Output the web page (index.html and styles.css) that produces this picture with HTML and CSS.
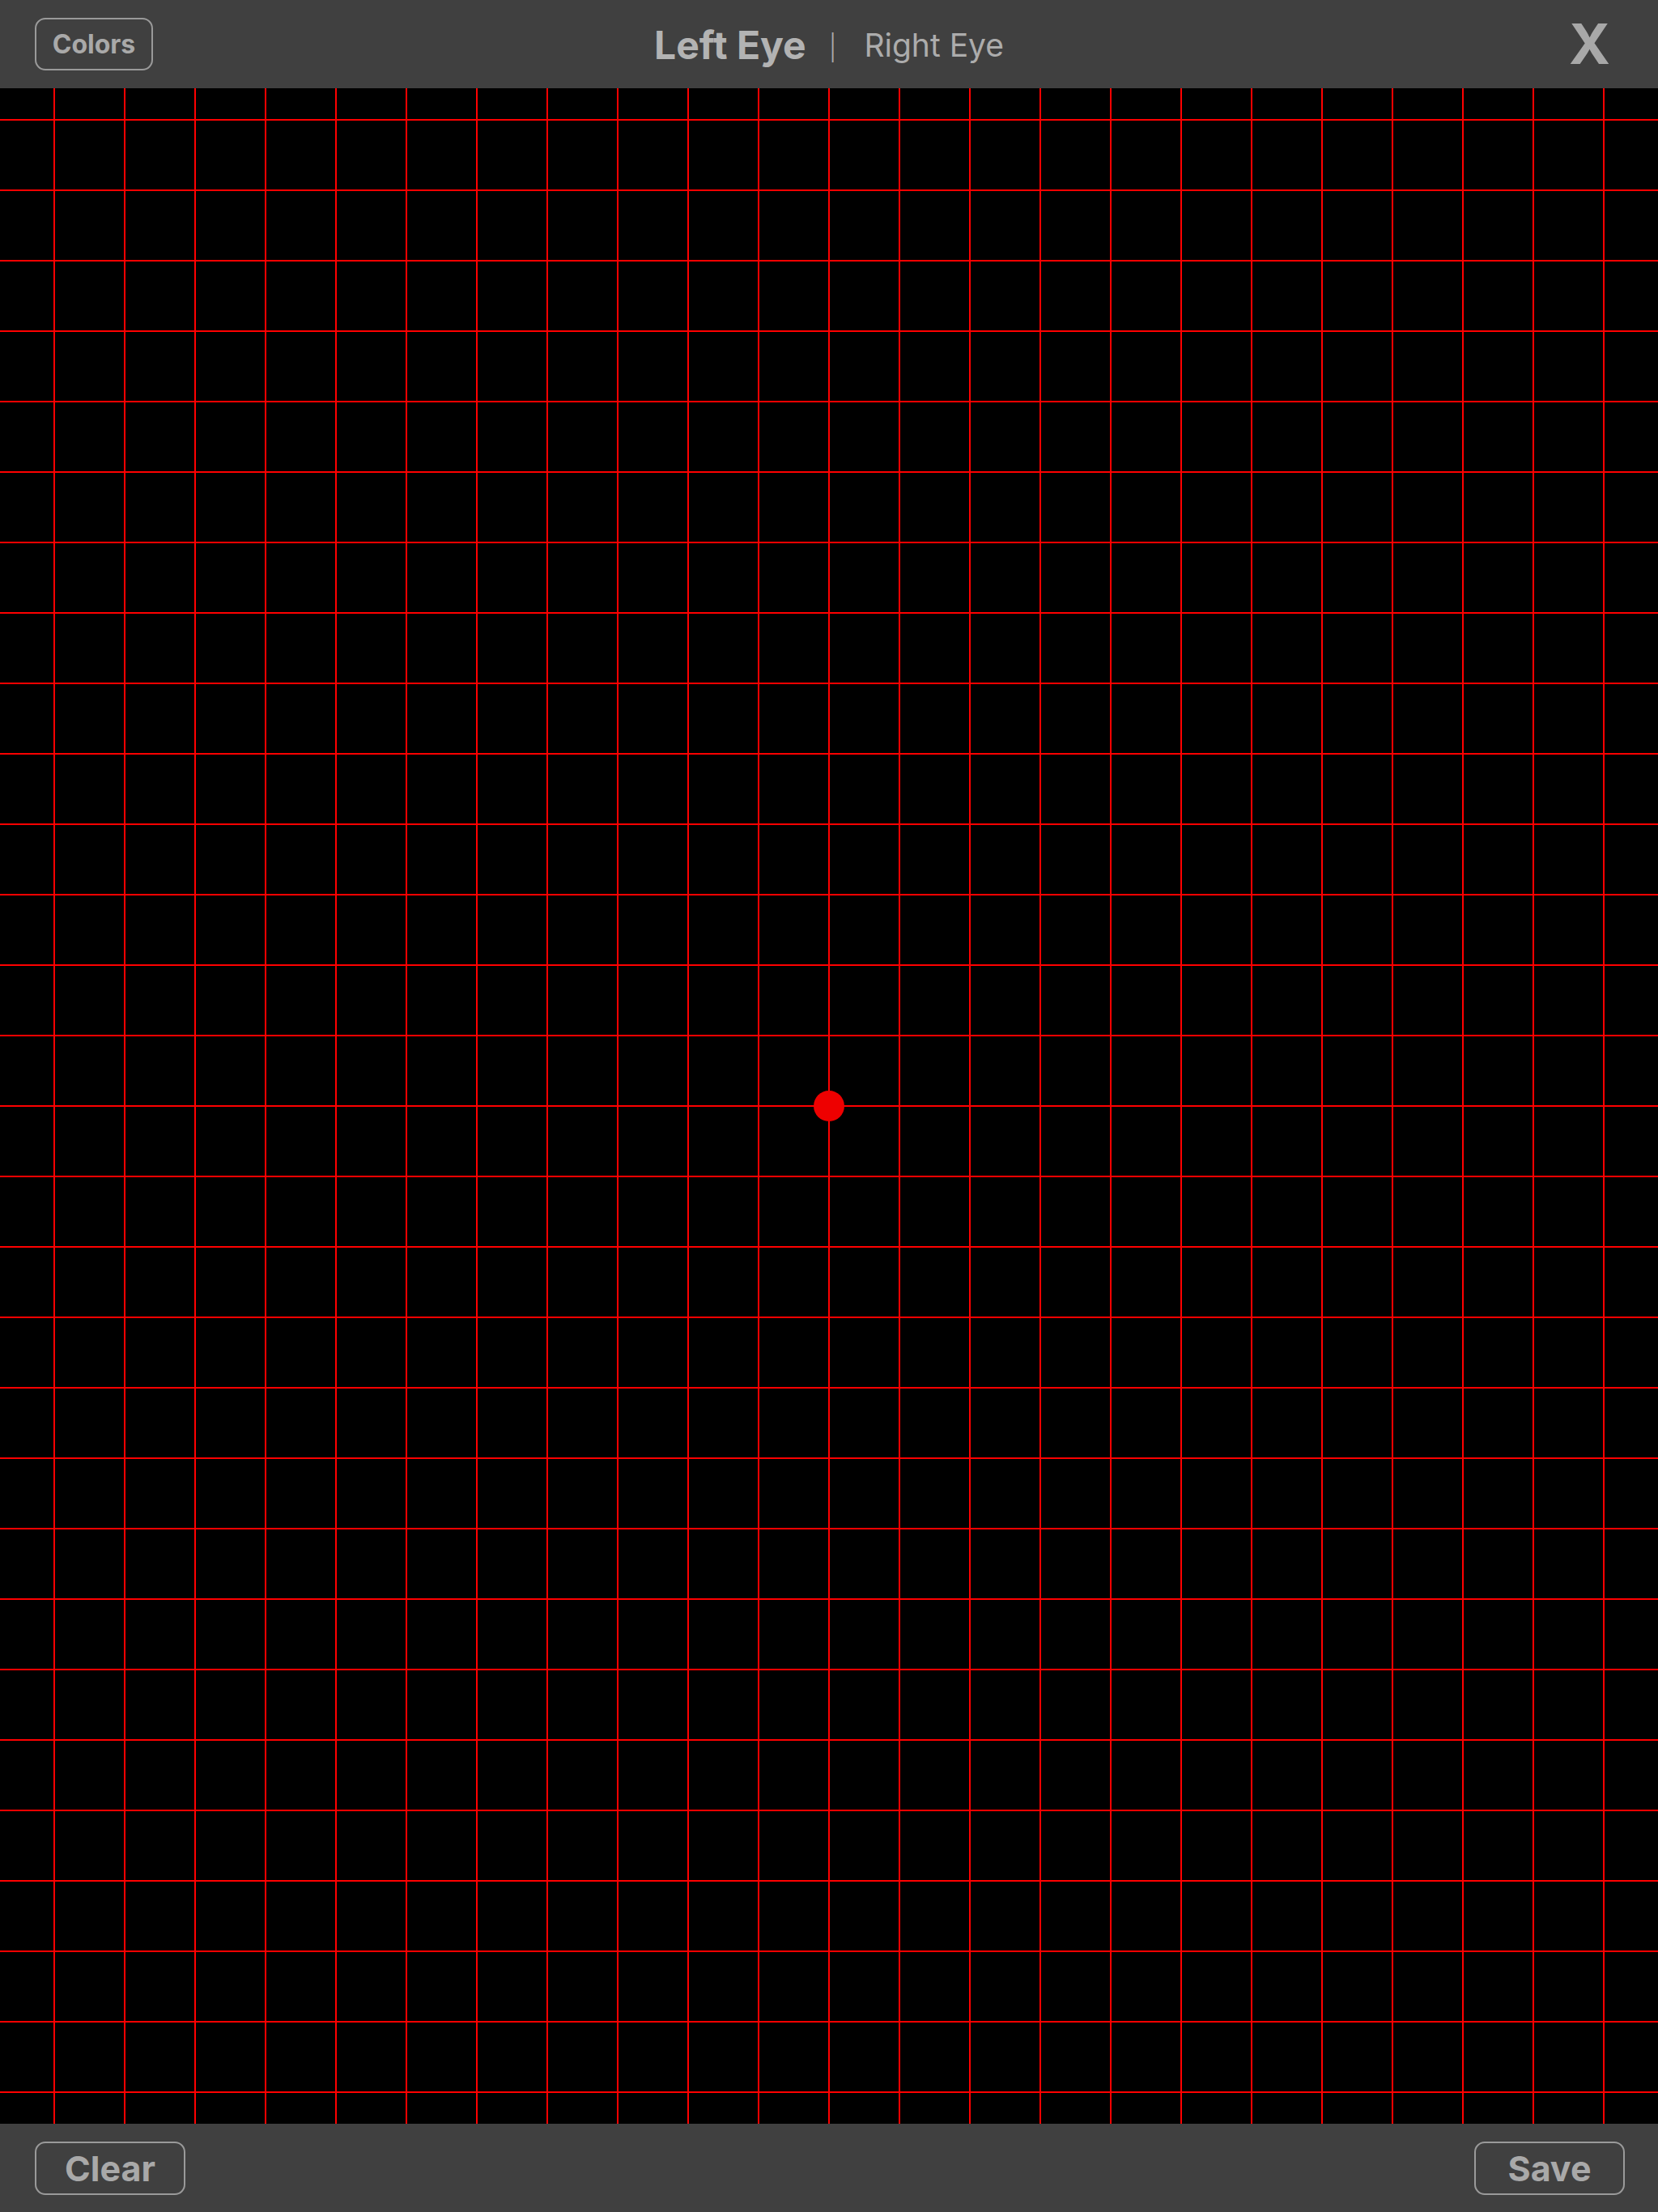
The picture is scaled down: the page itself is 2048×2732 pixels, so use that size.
FILE: index.html
```html
<!DOCTYPE html>
<html lang="en">
<head>
<meta charset="utf-8">
<title>Amsler Grid</title>
<link rel="stylesheet" href="styles.css">
</head>
<body>
<div class="app">
  <header class="topbar">
    <div class="left"><button class="btn btn-colors">Colors</button></div>
    <div class="title">
      <span class="eye active">Left Eye</span>
      <span class="sep">|</span>
      <span class="eye">Right Eye</span>
    </div>
    <div class="right"><span class="close">X</span></div>
  </header>
  <main class="grid">
    <div class="dot"></div>
  </main>
  <footer class="bottombar">
    <button class="btn btn-lg">Clear</button>
    <button class="btn btn-lg">Save</button>
  </footer>
</div>
</body>
</html>
```
FILE: styles.css
```css
html, body {
  margin: 0;
  padding: 0;
  background: #000;
}
.app {
  width: 2048px;
  height: 2732px;
  display: flex;
  flex-direction: column;
  font-family: Inter, Roboto, "Liberation Sans", sans-serif;
}
.topbar {
  height: 109px;
  flex: none;
  background: #404040;
  display: grid;
  grid-template-columns: 1fr auto 1fr;
  align-items: center;
  padding: 0 43px;
}
.left { display: flex; }
.right {
  display: flex;
  justify-content: flex-end;
  padding-right: 16px;
}
.btn {
  background: transparent;
  border: 2px solid #9a9a9a;
  border-radius: 13px;
  color: #a9a9a9;
  font-family: Inter, Roboto, "Liberation Sans", sans-serif;
  font-weight: 700;
  padding: 0;
  margin: 0;
  display: flex;
  align-items: center;
  justify-content: center;
}
.btn-colors {
  width: 146px;
  height: 65px;
  font-size: 32px;
}
.title {
  display: flex;
  align-items: center;
  color: #b0b0b0;
  padding-top: 2px;
}
.eye {
  font-size: 39px;
  font-weight: 400;
  color: #acacac;
}
.eye.active {
  font-size: 48px;
  font-weight: 700;
  color: #b3b3b3;
}
.sep {
  font-size: 31px;
  font-weight: 300;
  color: #aaa;
  margin: 6px 34px 0 28px;
}
.close {
  font-size: 69px;
  font-weight: 700;
  color: #a8a8a8;
  line-height: 1;
}
.grid {
  flex: 1;
  position: relative;
  background-color: #000;
  background-image:
    linear-gradient(to right, #ff0000 2px, transparent 2px),
    linear-gradient(to bottom, #ff0000 2px, transparent 2px);
  background-size: 87px 87px;
  background-position: 66px 38px;
}
.dot {
  position: absolute;
  width: 38px;
  height: 38px;
  border-radius: 50%;
  background: #ee0000;
  left: 1005px;
  top: 1238px;
}
.bottombar {
  height: 109px;
  flex: none;
  background: #404040;
  display: flex;
  align-items: center;
  justify-content: space-between;
  padding: 0 41px 0 43px;
}
.btn-lg {
  width: 186px;
  height: 66px;
  font-size: 43px;
}
```
